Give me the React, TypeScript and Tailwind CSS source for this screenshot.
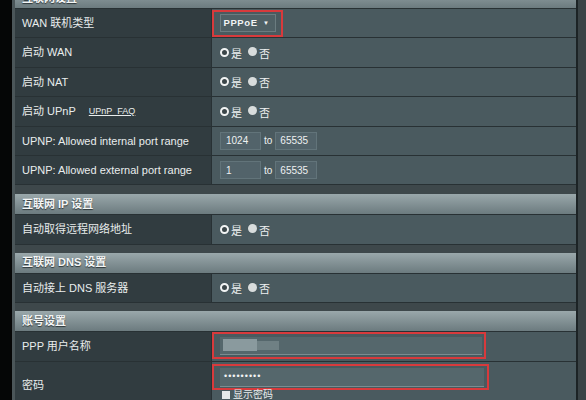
import React from "react";

const font = { fontFamily: '"Liberation Sans", "Noto Sans CJK SC", sans-serif' };

const Radio = ({ on }: { on: boolean }) =>
  on ? (
    <span className="inline-block w-[9px] h-[9px] rounded-full border-[2.5px] border-[#f2f4f4] bg-[#3b4649]" />
  ) : (
    <span className="inline-block w-[9px] h-[9px] rounded-full bg-[#d8dcdc]" />
  );

const YesNo = () => (
  <div className="flex items-center text-[11px] text-[#eef1f1]">
    <Radio on />
    <span className="ml-[2px] mt-[3px]">是</span>
    <span className="ml-[6px]">
      <Radio on={false} />
    </span>
    <span className="ml-[2px] mt-[3px]">否</span>
  </div>
);

const Row = ({ label, children, h = "h-[29.4px]" }: { label: React.ReactNode; children?: React.ReactNode; h?: string }) => (
  <div className={`flex shrink-0 ${h} border-b border-[#283134]`}>
    <div className="w-[197px] shrink-0 flex items-center pl-[7px] bg-[#313c40] border-r border-[#283134] text-[11px] text-[#e9eded]">
      {label}
    </div>
    <div className="flex-1 flex items-center pl-[8px] bg-[#4a5a5f]">{children}</div>
  </div>
);

const Header = ({ title, className = "" }: { title: string; className?: string }) => (
  <div
    className={`h-[21px] shrink-0 flex items-center pl-[7px] bg-gradient-to-b from-[#9aa8ab] to-[#6c7b7f] border-b border-[#283134] text-[11px] font-bold text-[#f4f6f6] [text-shadow:0_1px_1px_#2b3437] ${className}`}
  >
    {title}
  </div>
);

const Port = ({ from }: { from: string }) => (
  <div className="flex items-center text-[10px] text-[#eef1f1]">
    <div className="w-[41px] h-[18px] flex items-center pl-[5px] bg-[#52636a] border border-[#62747a]">{from}</div>
    <span className="mx-[3px] text-[10px]">to</span>
    <div className="w-[42px] h-[18px] flex items-center pl-[4px] bg-[#52636a] border border-[#62747a]">65535</div>
  </div>
);

export default function App() {
  return (
    <div className="w-[586px] h-[400px] overflow-hidden bg-black flex" style={font}>
      <div className="w-[12px] shrink-0 bg-[#050606]" />
      <div className="w-[564px] shrink-0 flex flex-col border-l-[3px] border-[#4b5659] bg-[#3e484b] overflow-hidden">
        <Header title="互联网设置" className="-mt-[12px]" />
        <Row label="WAN 联机类型">
          <div className="-ml-[8px] w-[71px] h-[27px] border-2 border-[#d83a3c] flex items-center justify-center">
            <div className="w-[56px] h-[18px] flex items-center justify-between pl-[3px] pr-[5px] bg-[#4f6065] border border-[#6b7c80] text-[9.5px] font-bold text-[#f1f4f4] tracking-[0.6px]">
              <span>PPPoE</span>
              <span className="text-[6px]">▼</span>
            </div>
          </div>
        </Row>
        <Row label="启动 WAN">
          <YesNo />
        </Row>
        <Row label="启动 NAT">
          <YesNo />
        </Row>
        <Row
          label={
            <>
              <span>启动 UPnP</span>
              <span className="ml-[13px] text-[9px] underline">UPnP_FAQ</span>
            </>
          }
        >
          <YesNo />
        </Row>
        <Row label="UPNP: Allowed internal port range">
          <Port from="1024" />
        </Row>
        <Row label="UPNP: Allowed external port range">
          <Port from="1" />
        </Row>

        <div className="h-[9px] shrink-0" />
        <Header title="互联网 IP 设置" />
        <Row label="自动取得远程网络地址">
          <YesNo />
        </Row>

        <div className="h-[8px] shrink-0" />
        <Header title="互联网 DNS 设置" />
        <Row label="自动接上 DNS 服务器">
          <YesNo />
        </Row>

        <div className="h-[8px] shrink-0" />
        <Header title="账号设置" />
        <Row label="PPP 用户名称" h="h-[30px]">
          <div className="-ml-[8px] mt-[-2px] w-[274px] h-[27px] border-2 border-[#d83a3c] flex items-center pl-[6px]">
            <div className="w-[262px] h-[18px] bg-[#55676c] border-b border-[#7b8c90] flex items-center pl-[3px]">
              <div className="w-[34px] h-[12px] bg-[#8a9a9e]" />
              <div className="w-[22px] h-[9px] bg-[#6f8084]" />
            </div>
          </div>
        </Row>
        <div className="flex shrink-0 h-[50px] border-b border-[#283134]">
          <div className="w-[197px] shrink-0 flex items-start pt-[15px] pl-[7px] bg-[#313c40] border-r border-[#283134] text-[11px] text-[#e9eded]">
            密码
          </div>
          <div className="flex-1 flex flex-col items-start bg-[#4a5a5f]">
            <div className="mt-[2px] w-[277px] h-[26px] border-2 border-[#d83a3c] flex items-center pl-[6px]">
              <div className="w-[264px] h-[19px] bg-[#55676c] border-b border-[#7b8c90] flex items-center pl-[4px] text-[9px] tracking-[1px] text-[#f2f4f4]">
                •••••••••
              </div>
            </div>
            <div className="flex items-center ml-[10px] -mt-[1px] text-[10px] leading-[12px] text-[#e9eded]">
              <span className="w-[8px] h-[8px] bg-[#e6e9e9]" />
              <span className="ml-[3px]">显示密码</span>
            </div>
          </div>
        </div>
      </div>
      <div className="w-[2px] shrink-0 bg-[#1c2325]" />
      <div className="w-[8px] shrink-0 bg-[#3a4346]" />
    </div>
  );
}
